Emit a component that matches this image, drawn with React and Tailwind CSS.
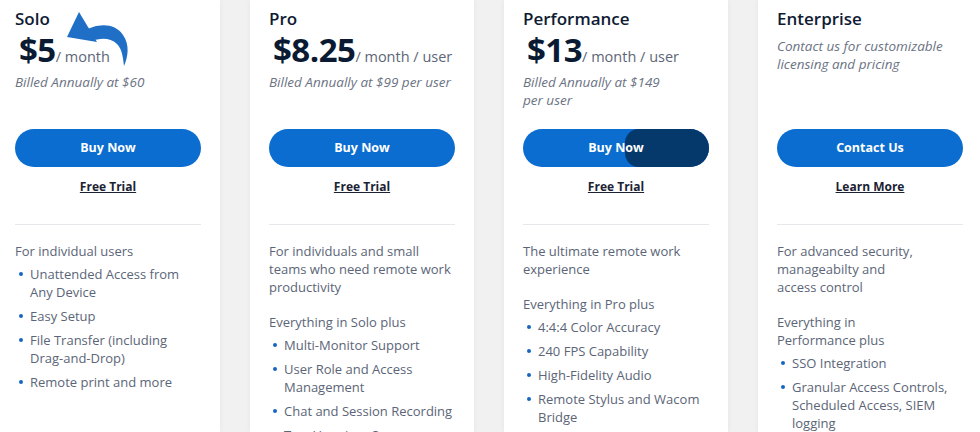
import React from "react";

const plans = [
  {
    name: "Solo",
    price: "$5",
    unit: "/ month",
    billed: ["Billed Annually at $60"],
    cta: "Buy Now",
    link: "Free Trial",
    intro: ["For individual users"],
    plus: null,
    items: [["Unattended Access from", "Any Device"], ["Easy Setup"], ["File Transfer (including", "Drag-and-Drop)"], ["Remote print and more"]],
  },
  {
    name: "Pro",
    price: "$8.25",
    unit: "/ month / user",
    billed: ["Billed Annually at $99 per user"],
    cta: "Buy Now",
    link: "Free Trial",
    intro: ["For individuals and small", "teams who need remote work", "productivity"],
    plus: ["Everything in Solo plus"],
    items: [["Multi-Monitor Support"], ["User Role and Access", "Management"], ["Chat and Session Recording"], ["Two User-in-a-Screen"]],
  },
  {
    name: "Performance",
    price: "$13",
    unit: "/ month / user",
    billed: ["Billed Annually at $149", "per user"],
    cta: "Buy Now",
    link: "Free Trial",
    hover: true,
    intro: ["The ultimate remote work", "experience"],
    plus: ["Everything in Pro plus"],
    items: [["4:4:4 Color Accuracy"], ["240 FPS Capability"], ["High-Fidelity Audio"], ["Remote Stylus and Wacom", "Bridge"]],
  },
  {
    name: "Enterprise",
    price: null,
    billed: ["Contact us for customizable", "licensing and pricing"],
    cta: "Contact Us",
    link: "Learn More",
    intro: ["For advanced security,", "manageabilty and", "access control"],
    plus: ["Everything in", "Performance plus"],
    items: [["SSO Integration"], ["Granular Access Controls,", "Scheduled Access, SIEM", "logging"]],
  },
];

function Lines({ lines }) {
  return lines.map((l, i) => (
    <React.Fragment key={i}>
      {l}
      {i < lines.length - 1 && <br />}
    </React.Fragment>
  ));
}

function Arrow() {
  return (
    <svg
      className="absolute left-[68px] top-[10px]"
      width="70"
      height="60"
      viewBox="68 10 70 60"
    >
      <path d="M83 12 L71 37 L101 42 Z" fill="#1f6fc6" />
      <path
        d="M85 33 C100 23 118 22 127 35 C134 45 132 57 128 66 C127 57 126 49 121 44 C114 37 104 38 95 41 Z"
        fill="#1f6fc6"
      />
    </svg>
  );
}

function PlanCard({ plan, index }) {
  return (
    <div className="relative w-[224px] shrink-0 bg-white px-[19px] pt-[8px] shadow-[0_0_6px_rgba(0,0,0,0.05)]">
      {index === 0 && <Arrow />}
      <div className="h-[121px]">
        <h3 className="text-[17px] leading-[22px] font-semibold text-[#0f1b33]">{plan.name}</h3>
        {plan.price ? (
          <>
            <div className="mt-[2px] ml-[4px] flex h-[36px] items-baseline">
              <span className="text-[33px] leading-[36px] font-bold tracking-[-0.5px] text-[#0b1a33]">{plan.price}</span>
              <span className="text-[14.5px] text-[#5d6677]">{plan.unit}</span>
            </div>
            <p className="mt-[5px] text-[13.5px] leading-[18px] italic text-[#6b7383]">
              <Lines lines={plan.billed} />
            </p>
          </>
        ) : (
          <p className="mt-[7px] text-[13.5px] leading-[18px] italic text-[#6b7383]">
            <Lines lines={plan.billed} />
          </p>
        )}
      </div>
      <button className="relative h-[38px] w-full overflow-hidden rounded-full bg-[#0a6dcf] text-[12.5px] font-bold text-white">
        {plan.hover && (
          <span className="absolute right-0 top-0 h-full w-[84px] rounded-l-[14px] bg-[#05386b]" />
        )}
        <span className="relative">{plan.cta}</span>
      </button>
      <div className="mt-[12px] text-center text-[12px] leading-[16px]">
        <a className="font-bold text-[#1b2233] underline">{plan.link}</a>
      </div>
      <div className="mt-[29px] border-t border-[#e6e8ec]" />
      <div className="mt-[17px] text-[13px] leading-[18px] text-[#5b6577]">
        <p>
          <Lines lines={plan.intro} />
        </p>
        {plan.plus && (
          <p className="mt-[17px]">
            <Lines lines={plan.plus} />
          </p>
        )}
        <ul className="mt-[5px] flex flex-col gap-[6px]">
          {plan.items.map((item, i) => (
            <li key={i} className="relative pl-[15px]">
              <span className="absolute left-[4px] top-[7px] h-[4px] w-[4px] rounded-full bg-[#1767c0]" />
              <Lines lines={item} />
            </li>
          ))}
        </ul>
      </div>
    </div>
  );
}

export default function App() {
  return (
    <div
      className="h-[432px] w-[980px] overflow-hidden bg-[#f1f1f1]"
      style={{ fontFamily: '"Open Sans", "Noto Sans", sans-serif' }}
    >
      <div className="-ml-1 flex h-[432px] gap-[30px]">
        {plans.map((plan, i) => (
          <PlanCard key={plan.name} plan={plan} index={i} />
        ))}
      </div>
    </div>
  );
}
